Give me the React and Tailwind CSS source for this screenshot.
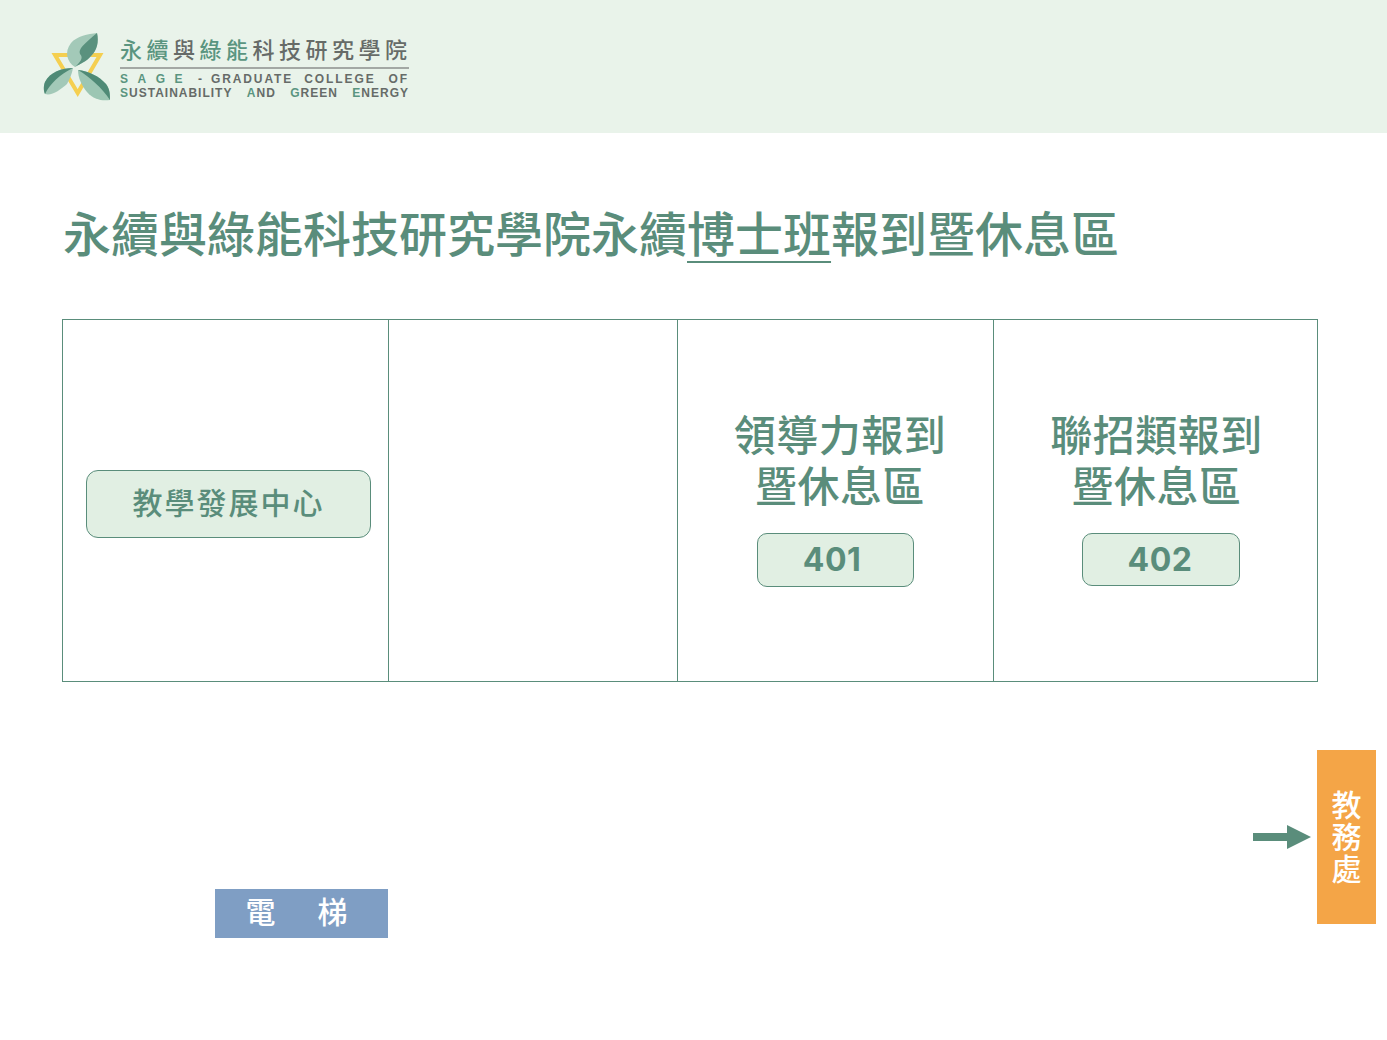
const cjk = { fontFamily: '"Noto Sans CJK TC", "Noto Sans", sans-serif' }

function LogoMark() {
  return (
    <svg width="72" height="72" viewBox="0 0 72 72" className="shrink-0">
      <path d="M13 25 L58 25 L35.7 63 Z" fill="none" stroke="#f5cf50" strokeWidth="4" />
      <path d="M33 37 C25 32 22 22 29 13 C35 6 46 4 55 3 C57 12 55 20 49 26 C45 31 38 34 33 37 Z" fill="#a3c9b8" />
      <path d="M55 3 C57 12 55 20 49 26 C45 31 38 34 33 37 C38 32 42 28 38 24 C36 19 42 14 55 3 Z" fill="#5a917e" />
      <path d="M31 38 C20 38 8 42 3 52 C1 57 2 62 3 64 C10 66 18 60 25 54 C28 49 30 43 31 38 Z" fill="#a3c9b8" />
      <path d="M31 38 C20 38 8 42 3 52 C1 57 2 62 3 64 C8 54 18 44 31 38 Z" fill="#4f8a76" />
      <path d="M36 40 C46 41 57 46 64 54 C68 59 68 65 68 70 C60 71 52 70 45 62 C40 56 36 48 36 40 Z" fill="#9cc6b3" />
      <path d="M36 40 C46 41 57 46 64 54 C68 59 68 65 68 70 C60 58 48 47 36 40 Z" fill="#4f8a76" />
    </svg>
  )
}

function LogoText() {
  return (
    <div className="ml-[6px] mt-[4px] w-[289px] text-[#666b68]">
      <div className="h-[33px] text-[22px] leading-[29px] font-medium tracking-[4.5px] whitespace-nowrap" style={cjk}>
        <span className="text-[#5a9580]">永續</span>
        <span>與</span>
        <span className="text-[#5a9580]">綠能</span>
        <span>科技研究學院</span>
      </div>
      <div className="h-[2px] bg-[#a3a8a4]" />
      <div className="mt-[4px] flex font-['Liberation_Sans',sans-serif] text-[12px] leading-[13px] font-bold tracking-[1.9px] whitespace-nowrap">
        <span className="text-[#5a9580] tracking-[9.5px]">SAGE</span>
        <span className="ml-[6px]">-</span>
        <span className="ml-[7px]">GRADUATE</span>
        <span className="ml-[11px]">COLLEGE</span>
        <span className="ml-auto">OF</span>
      </div>
      <div className="mt-px flex justify-between font-['Liberation_Sans',sans-serif] text-[12px] leading-[13px] font-bold tracking-[1px] whitespace-nowrap">
        <span><span className="text-[#5a9580]">S</span>USTAINABILITY</span>
        <span><span className="text-[#5a9580]">A</span>ND</span>
        <span><span className="text-[#5a9580]">G</span>REEN</span>
        <span><span className="text-[#5a9580]">E</span>NERGY</span>
      </div>
    </div>
  )
}

function RoomCell({ lines, room, width, btnWidth, btnHeight, textShift, btnShift, last }) {
  return (
    <div className={`${width} h-full flex flex-col items-center pt-[87px] ${last ? '' : 'border-r border-[#5a8d7b]'}`}>
      <div className={`${textShift} text-[42px] leading-[51px] font-medium text-center text-[#5a8d7b] tracking-[0.5px]`} style={cjk}>
        {lines.map(l => <div key={l}>{l}</div>)}
      </div>
      <div className={`mt-[24px] ${btnWidth} ${btnHeight} ${btnShift} rounded-[10px] border border-[#5a8d7b] bg-[#e1efe3] flex items-center justify-center font-['Inter',sans-serif] text-[32px] font-bold tracking-[0.5px] text-[#5a8d7b]`}>
        {room}
      </div>
    </div>
  )
}

export default function App() {
  return (
    <div className="w-[1387px] h-[1040px] bg-white overflow-hidden">
      <header className="h-[133px] bg-[#e9f3ea] flex items-start pl-[42px] pt-[30px]">
        <LogoMark />
        <LogoText />
      </header>

      <h1 className="mt-[70px] ml-[63px] h-[60px] text-[48px] leading-[56px] font-medium text-[#5a8d7b] whitespace-nowrap" style={cjk}>
        永續與綠能科技研究學院永續<span className="underline decoration-2 underline-offset-[9px] [text-decoration-skip-ink:none]">博士班</span>報到暨休息區
      </h1>

      <div className="mt-[56px] ml-[62px] w-[1256px] h-[363px] border border-[#5a8d7b] flex">
        <div className="w-[326px] h-full border-r border-[#5a8d7b] flex items-center pl-[23px] pt-[7px]">
          <div className="w-[285px] h-[68px] rounded-[12px] border border-[#5a8d7b] bg-[#e1efe3] flex items-center justify-center pb-[6px] text-[30px] font-medium tracking-[2px] text-[#5a8d7b]" style={cjk}>
            教學發展中心
          </div>
        </div>
        <div className="w-[289px] h-full border-r border-[#5a8d7b]" />
        <RoomCell lines={['領導力報到', '暨休息區']} room="401" width="w-[316px]" btnWidth="w-[157px] pr-[7px]" btnHeight="h-[54px]" textShift="ml-[9px]" btnShift="" />
        <RoomCell lines={['聯招類報到', '暨休息區']} room="402" width="w-[323px]" btnWidth="w-[158px] pr-[2px]" btnHeight="h-[53px]" textShift="ml-[2px]" btnShift="ml-[11px]" last />
      </div>

      <div className="mt-[68px] flex items-start">
        <div className="mt-[139px] ml-[215px] w-[173px] h-[49px] bg-[#7f9ec4] flex items-center justify-center gap-[42px] pr-[10px] pb-[6px] text-[30px] font-medium text-white" style={cjk}>
          <span>電</span>
          <span>梯</span>
        </div>
        <svg width="58" height="24" viewBox="0 0 58 24" className="ml-[865px] mt-[75px] shrink-0">
          <path d="M0 8 H34 V0 L58 12 L34 24 V16 H0 Z" fill="#5a8d7b" />
        </svg>
        <div className="ml-[6px] w-[59px] h-[174px] bg-[#f4a547] flex items-center justify-center pb-[4px] text-[30px] leading-[32px] font-medium text-white text-center" style={cjk}>
          <div>教<br />務<br />處</div>
        </div>
      </div>
    </div>
  )
}
